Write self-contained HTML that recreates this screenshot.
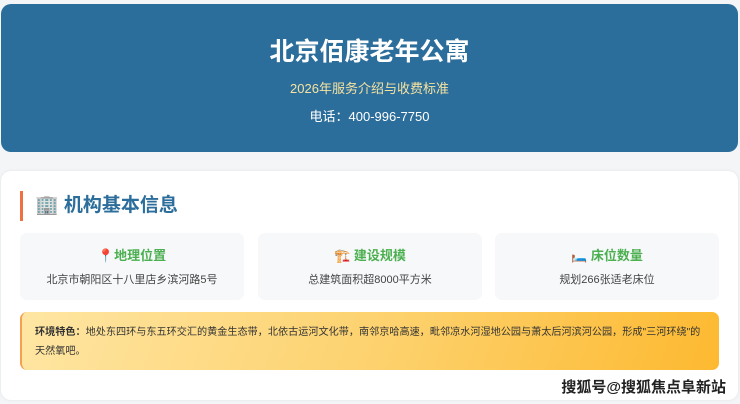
<!DOCTYPE html>
<html><head><meta charset="utf-8"><style>
*{margin:0;padding:0;box-sizing:border-box}
body{width:740px;height:404px;background:#f4f5f7;font-family:"Liberation Sans","Noto Sans CJK SC",sans-serif;position:relative;overflow:hidden}
.hdr{position:absolute;left:1px;top:4px;width:737px;height:148px;background:#2c6e9b;border-radius:10px;text-align:center;color:#fff}
.hdr h1{font-size:25px;font-weight:bold;margin-top:33px;line-height:30px}
.hdr .s{color:#f6e3a0;font-size:13px;margin-top:13px;line-height:18px}
.hdr .t{font-size:13px;margin-top:10px;line-height:18px}
.card{position:absolute;left:1px;top:171px;width:737px;height:229px;background:#fff;border-radius:10px;box-shadow:0 0 3px rgba(0,0,0,.08)}
.ttl{position:absolute;left:19px;top:20px;height:30px;border-left:3px solid #f07040;padding-left:12px;font-size:19px;font-weight:bold;color:#2c6e9b;line-height:30px}
.box{position:absolute;top:62px;width:224px;height:67px;background:#f6f8fa;border-radius:7px;text-align:center}
.box b{display:block;color:#4caf50;font-size:13px;margin-top:14px;line-height:18px}
.box p{font-size:11px;color:#444;margin-top:7px;line-height:16px}
.env{position:absolute;left:19px;top:141px;width:699px;height:58px;border-radius:7px;border-left:2px solid #f5a050;background:linear-gradient(110deg,#fee6a3,#fdd06a 55%,#fdb930);font-size:10.15px;color:#333;padding:11px 0 11px 13px;line-height:19px;white-space:nowrap;overflow:hidden}
.wm{position:absolute;right:14px;top:376px;font-size:15px;color:#222;font-weight:bold;text-shadow:0 0 2px #fff}
</style></head><body>
<div class="hdr"><h1>北京佰康老年公寓</h1><div class="s">2026年服务介绍与收费标准</div><div class="t">电话：400-996-7750</div></div>
<div class="card">
<div class="ttl">🏢 机构基本信息</div>
<div class="box" style="left:19px"><b>📍地理位置</b><p>北京市朝阳区十八里店乡滨河路5号</p></div>
<div class="box" style="left:257px"><b>🏗️ 建设规模</b><p>总建筑面积超8000平方米</p></div>
<div class="box" style="left:494px"><b>🛏️ 床位数量</b><p>规划266张适老床位</p></div>
<div class="env"><b>环境特色：</b>地处东四环与东五环交汇的黄金生态带，北依古运河文化带，南邻京哈高速，毗邻凉水河湿地公园与萧太后河滨河公园，形成"三河环绕"的<br>天然氧吧。</div>
</div>
<div class="wm">搜狐号@搜狐焦点阜新站</div>
</body></html>
